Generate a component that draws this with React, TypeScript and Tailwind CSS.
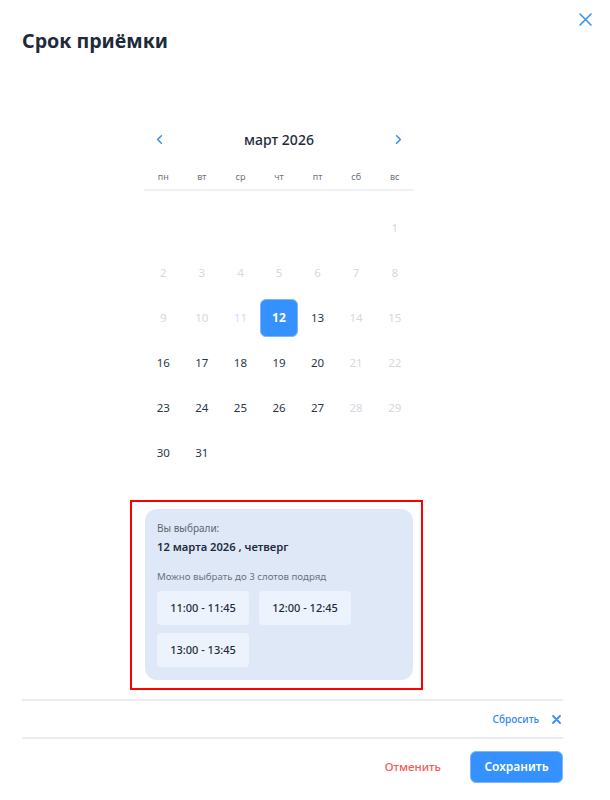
import { ChevronLeft, ChevronRight } from "lucide-react";

const weekdays = ["пн", "вт", "ср", "чт", "пт", "сб", "вс"];

// март 2026 starts on Sunday
const cells: (number | null)[] = [null, null, null, null, null, null, ...Array.from({ length: 31 }, (_, i) => i + 1)];

const activeDays = [13, 16, 17, 18, 19, 20, 23, 24, 25, 26, 27, 30, 31];
const selectedDay = 12;

const slots = ["11:00 - 11:45", "12:00 - 12:45", "13:00 - 13:45"];

function Cross({ size, width, className }: { size: number; width: number; className?: string }) {
  return (
    <svg width={size} height={size} viewBox={`0 0 ${size} ${size}`} fill="none" className={className}>
      <path d={`M1 1L${size - 1} ${size - 1}M${size - 1} 1L1 ${size - 1}`} stroke="currentColor" strokeWidth={width} strokeLinecap="round" />
    </svg>
  );
}

function DayCell({ day }: { day: number | null }) {
  if (day === null) return <div className="h-[45px]" />;
  if (day === selectedDay) {
    return (
      <div className="h-[45px] flex items-center justify-center">
        <div className="w-[38px] h-[38px] rounded-[6px] bg-[#3591fd] border border-[#7db6ff] flex items-center justify-center text-white text-[12px] font-bold">
          {day}
        </div>
      </div>
    );
  }
  const active = activeDays.includes(day);
  return (
    <div
      className={`h-[45px] flex items-center justify-center text-[11.5px] ${
        active ? "text-[#2b3648]" : day === 11 ? "text-[#cfe0f7]" : "text-[#d5d8de]"
      }`}
    >
      {day}
    </div>
  );
}

export default function App() {
  return (
    <div className="relative w-[610px] h-[800px] bg-white text-[#1f2b3d] font-['Noto_Sans','Open_Sans',sans-serif]">
      {/* Close */}
      <button className="absolute top-[13px] right-[18px] text-[#3b8ff5]" aria-label="Закрыть">
        <Cross size={13} width={1.6} />
      </button>

      <h1 className="pt-[27px] pl-[22px] text-[19.6px] leading-[28px] font-bold text-[#1e2a3b]">Срок приёмки</h1>

      {/* Calendar */}
      <div className="ml-[144px] mt-[72px] w-[270px]">
        <div className="flex items-center justify-between px-[8px] h-[24px]">
          <ChevronLeft size={15} strokeWidth={2.6} className="text-[#3b8ff5]" />
          <span className="text-[14px] font-medium text-[#1f2b3d]">март 2026</span>
          <ChevronRight size={15} strokeWidth={2.6} className="text-[#3b8ff5]" />
        </div>
        <div className="mt-[19px] grid grid-cols-7 pb-[5px] border-b-2 border-[#f0f1f3]">
          {weekdays.map((d) => (
            <div key={d} className="text-center text-[9px] leading-[14px] text-[#6b7280]">
              {d}
            </div>
          ))}
        </div>
        <div className="mt-[14px] grid grid-cols-7">
          {cells.map((d, i) => (
            <DayCell key={i} day={d} />
          ))}
        </div>
      </div>

      {/* Selected info */}
      <div className="ml-[130px] mt-[25px] w-[293px] border-2 border-[#ff0000] pl-[13px] pr-[8px] pt-[7px] pb-[8px]">
        <div className="rounded-[12px] bg-[#dfe8f6] pl-[12px] pr-[12px] pt-[12px] pb-[13px]">
          <div className="text-[10px] leading-[14px] text-[#5d6675]">Вы выбрали:</div>
          <div className="mt-[3px] text-[11.2px] leading-[18px] font-semibold text-[#1f2b3d]">12 марта 2026 , четверг</div>
          <div className="mt-[14px] text-[9.7px] leading-[14px] text-[#6a7382]">Можно выбрать до 3 слотов подряд</div>
          <div className="mt-[7px] flex flex-wrap gap-x-[10px] gap-y-[8px] w-[210px]">
            {slots.map((s) => (
              <div
                key={s}
                className="w-[92px] h-[34px] rounded-[4px] bg-[#edf3fc] flex items-center justify-center text-[11px] font-medium text-[#1f2b3d]"
              >
                {s}
              </div>
            ))}
          </div>
        </div>
      </div>

      {/* Footer */}
      <div className="mx-[22px] mt-[9px] w-[541px]">
        <div className="border-t-2 border-[#ebecef]" />
        <div className="h-[36px] flex items-center justify-end gap-[13px] pr-[2px]">
          <span className="text-[10px] font-medium text-[#2f86ef]">Сбросить</span>
          <Cross size={9} width={1.8} className="text-[#3b8ff5]" />
        </div>
        <div className="border-t-2 border-[#ebecef]" />
        <div className="mt-[12px] flex items-center justify-end gap-[29px]">
          <span className="text-[11.5px] font-medium text-[#f25a5a]">Отменить</span>
          <button className="w-[93px] h-[32px] rounded-[6px] bg-[#3591fd] border border-[#7db6ff] text-white text-[12px] font-semibold">
            Сохранить
          </button>
        </div>
      </div>
    </div>
  );
}
